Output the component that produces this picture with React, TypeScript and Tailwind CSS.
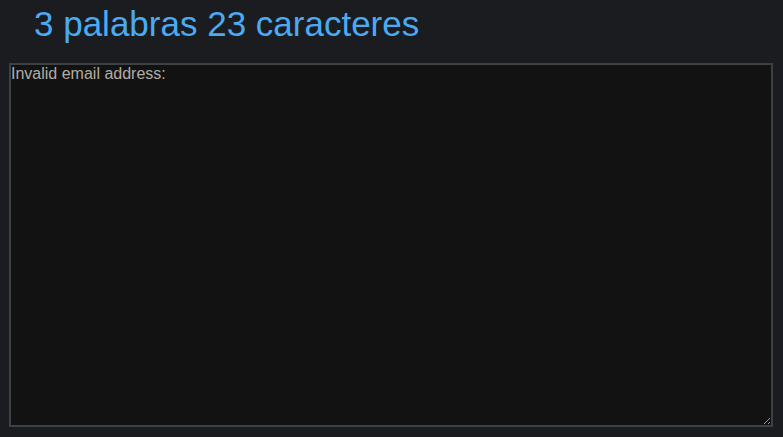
import { useState } from "react";

const App = () => {
  const [text, setText] = useState("Invalid email address:\n");

  const words = text.trim() ? text.trim().split(/\s+/).length : 0;

  return (
    <div className="min-h-screen bg-[#1a1c1f] px-[9px] pt-[3px] font-['Liberation_Sans',Arial,sans-serif]">
      <h1 className="pl-[25px] text-[35px] leading-[42px] text-[#4aaaf4] mb-[18px]">
        {words} palabras {text.length} caracteres
      </h1>
      <textarea
        value={text}
        onChange={(e) => setText(e.target.value)}
        className="block w-[764px] h-[364px] bg-[#121212] border-2 border-[#3c4144] text-[#b2ada4] text-[16px] leading-[18px] p-0 font-['Liberation_Sans',Arial,sans-serif] outline-none"
      />
    </div>
  );
};

export default App;
